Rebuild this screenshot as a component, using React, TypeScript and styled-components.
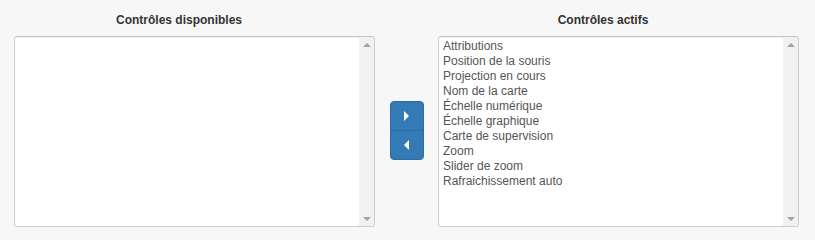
import React from "react";
import styled, { createGlobalStyle } from "styled-components";

const GlobalStyle = createGlobalStyle`
  html, body {
    margin: 0;
    padding: 0;
    background: #f7f7f7;
  }
  body {
    font-family: "Liberation Sans", Arial, Helvetica, sans-serif;
  }
`;

const Page = styled.div`
  width: 815px;
  height: 238px;
  box-sizing: border-box;
  padding: 12px 0 0 14px;
  display: grid;
  grid-template-columns: 361px 63px 361px;
  column-gap: 0;
  align-items: start;
`;

const Column = styled.div`
  display: flex;
  flex-direction: column;
`;

const Title = styled.div`
  font-size: 12px;
  font-weight: bold;
  color: #333;
  line-height: 17px;
  height: 17px;
  text-align: center;
  padding-right: 31px;
  margin-bottom: 7px;
`;

const ListBox = styled.div`
  height: 191px;
  box-sizing: border-box;
  border: 1px solid #cfcfcf;
  border-top-color: #c4c4c4;
  border-radius: 3px;
  background: #fff;
  box-shadow: inset 0 1px 1px rgba(0, 0, 0, 0.06);
  display: flex;
  overflow: hidden;
`;

const Items = styled.ul`
  flex: 1;
  margin: 0;
  padding: 2px 4px 1px;
  list-style: none;
`;

const Item = styled.li`
  font-size: 12px;
  line-height: 15px;
  color: #555;
  white-space: nowrap;
`;

const ScrollBar = styled.div`
  width: 15px;
  background: #f1f1f1;
  display: flex;
  flex-direction: column;
  justify-content: space-between;
  align-items: center;
  padding: 6px 0 5px;
`;

const ArrowUp = styled.div`
  width: 0;
  height: 0;
  border-left: 4px solid transparent;
  border-right: 4px solid transparent;
  border-bottom: 4px solid #a3a3a3;
`;

const ArrowDown = styled.div`
  width: 0;
  height: 0;
  border-left: 4px solid transparent;
  border-right: 4px solid transparent;
  border-top: 4px solid #a3a3a3;
`;

const Middle = styled.div`
  display: flex;
  justify-content: center;
  padding-top: 89px;
`;

const ButtonGroup = styled.div`
  display: flex;
  flex-direction: column;
  width: 34px;
`;

const MoveButton = styled.button<{ $pos: "top" | "bottom" }>`
  width: 34px;
  height: 30px;
  margin: 0;
  padding: 0;
  box-sizing: border-box;
  background: #337ab7;
  border: 1px solid #2e6da4;
  border-radius: ${(p) => (p.$pos === "top" ? "4px 4px 0 0" : "0 0 4px 4px")};
  ${(p) => (p.$pos === "bottom" ? "margin-top: -1px;" : "")}
  display: flex;
  align-items: center;
  justify-content: center;
  cursor: pointer;
`;

const items = [
  "Attributions",
  "Position de la souris",
  "Projection en cours",
  "Nom de la carte",
  "Échelle numérique",
  "Échelle graphique",
  "Carte de supervision",
  "Zoom",
  "Slider de zoom",
  "Rafraichissement auto",
];

const Triangle = ({ dir }: { dir: "left" | "right" }) => (
  <svg width="5" height="10" viewBox="0 0 5 10">
    {dir === "right" ? (
      <polygon points="0,0 5,5 0,10" fill="#fff" />
    ) : (
      <polygon points="5,0 0,5 5,10" fill="#fff" />
    )}
  </svg>
);

export default function App() {
  return (
    <>
      <GlobalStyle />
      <Page>
        <Column>
          <Title>Contrôles disponibles</Title>
          <ListBox>
            <Items />
            <ScrollBar>
              <ArrowUp />
              <ArrowDown />
            </ScrollBar>
          </ListBox>
        </Column>
        <Middle>
          <ButtonGroup>
            <MoveButton $pos="top" aria-label="Ajouter">
              <Triangle dir="right" />
            </MoveButton>
            <MoveButton $pos="bottom" aria-label="Retirer">
              <Triangle dir="left" />
            </MoveButton>
          </ButtonGroup>
        </Middle>
        <Column>
          <Title>Contrôles actifs</Title>
          <ListBox>
            <Items>
              {items.map((it) => (
                <Item key={it}>{it}</Item>
              ))}
            </Items>
            <ScrollBar>
              <ArrowUp />
              <ArrowDown />
            </ScrollBar>
          </ListBox>
        </Column>
      </Page>
    </>
  );
}
